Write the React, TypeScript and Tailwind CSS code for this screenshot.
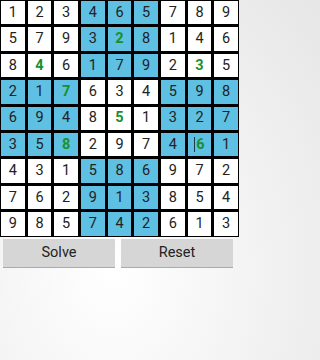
import React from 'react'

const rows = [
  '123465789',
  '579328146',
  '846179235',
  '217634598',
  '694851327',
  '358297461',
  '431586972',
  '762913854',
  '985742613',
]

// cells typed by the user show up green
const given = new Set(['1-4', '2-1', '2-7', '3-2', '4-4', '5-2', '5-7'])

function Cell({ r, c, v }: { r: number; c: number; v: string }) {
  const box = Math.floor(r / 3) + Math.floor(c / 3)
  const blue = box % 2 === 1
  const green = given.has(`${r}-${c}`)
  const cursor = r === 5 && c === 7
  return (
    <div
      className={`relative flex h-[23.4px] items-center justify-center text-[14.5px] ${
        blue ? 'bg-[#5ec0e3]' : 'bg-white'
      } ${green ? 'font-bold text-[#1b8f2e]' : 'text-[#222]'}`}
    >
      {cursor && <span className="mr-px h-[15px] w-px bg-[#1c3a4a]" />}
      {v}
    </div>
  )
}

export default function App() {
  return (
    <div
      className="relative h-[360px] w-full min-w-[240px] overflow-hidden bg-radial-[at_35%_75%] from-white to-[#e6e6e6]"
      style={{ fontFamily: 'Roboto, "Liberation Sans", sans-serif' }}
    >
      <div className="grid w-[239px] grid-cols-9 gap-[3px] bg-black p-px">
        {rows.map((row, r) =>
          row.split('').map((v, c) => <Cell key={`${r}-${c}`} r={r} c={c} v={v} />)
        )}
      </div>
      <div className="mt-[2px] flex w-[240px] gap-[6px] pl-[3px] pr-[7px]">
        <button
          type="button"
          className="flex h-[29px] flex-1 items-center justify-center border-b border-[#aaa] bg-[#d6d6d6] text-[14.5px] text-[#222]"
        >
          Solve
        </button>
        <button
          type="button"
          className="flex h-[29px] flex-1 items-center justify-center border-b border-[#aaa] bg-[#d6d6d6] text-[14.5px] text-[#222]"
        >
          Reset
        </button>
      </div>
    </div>
  )
}
